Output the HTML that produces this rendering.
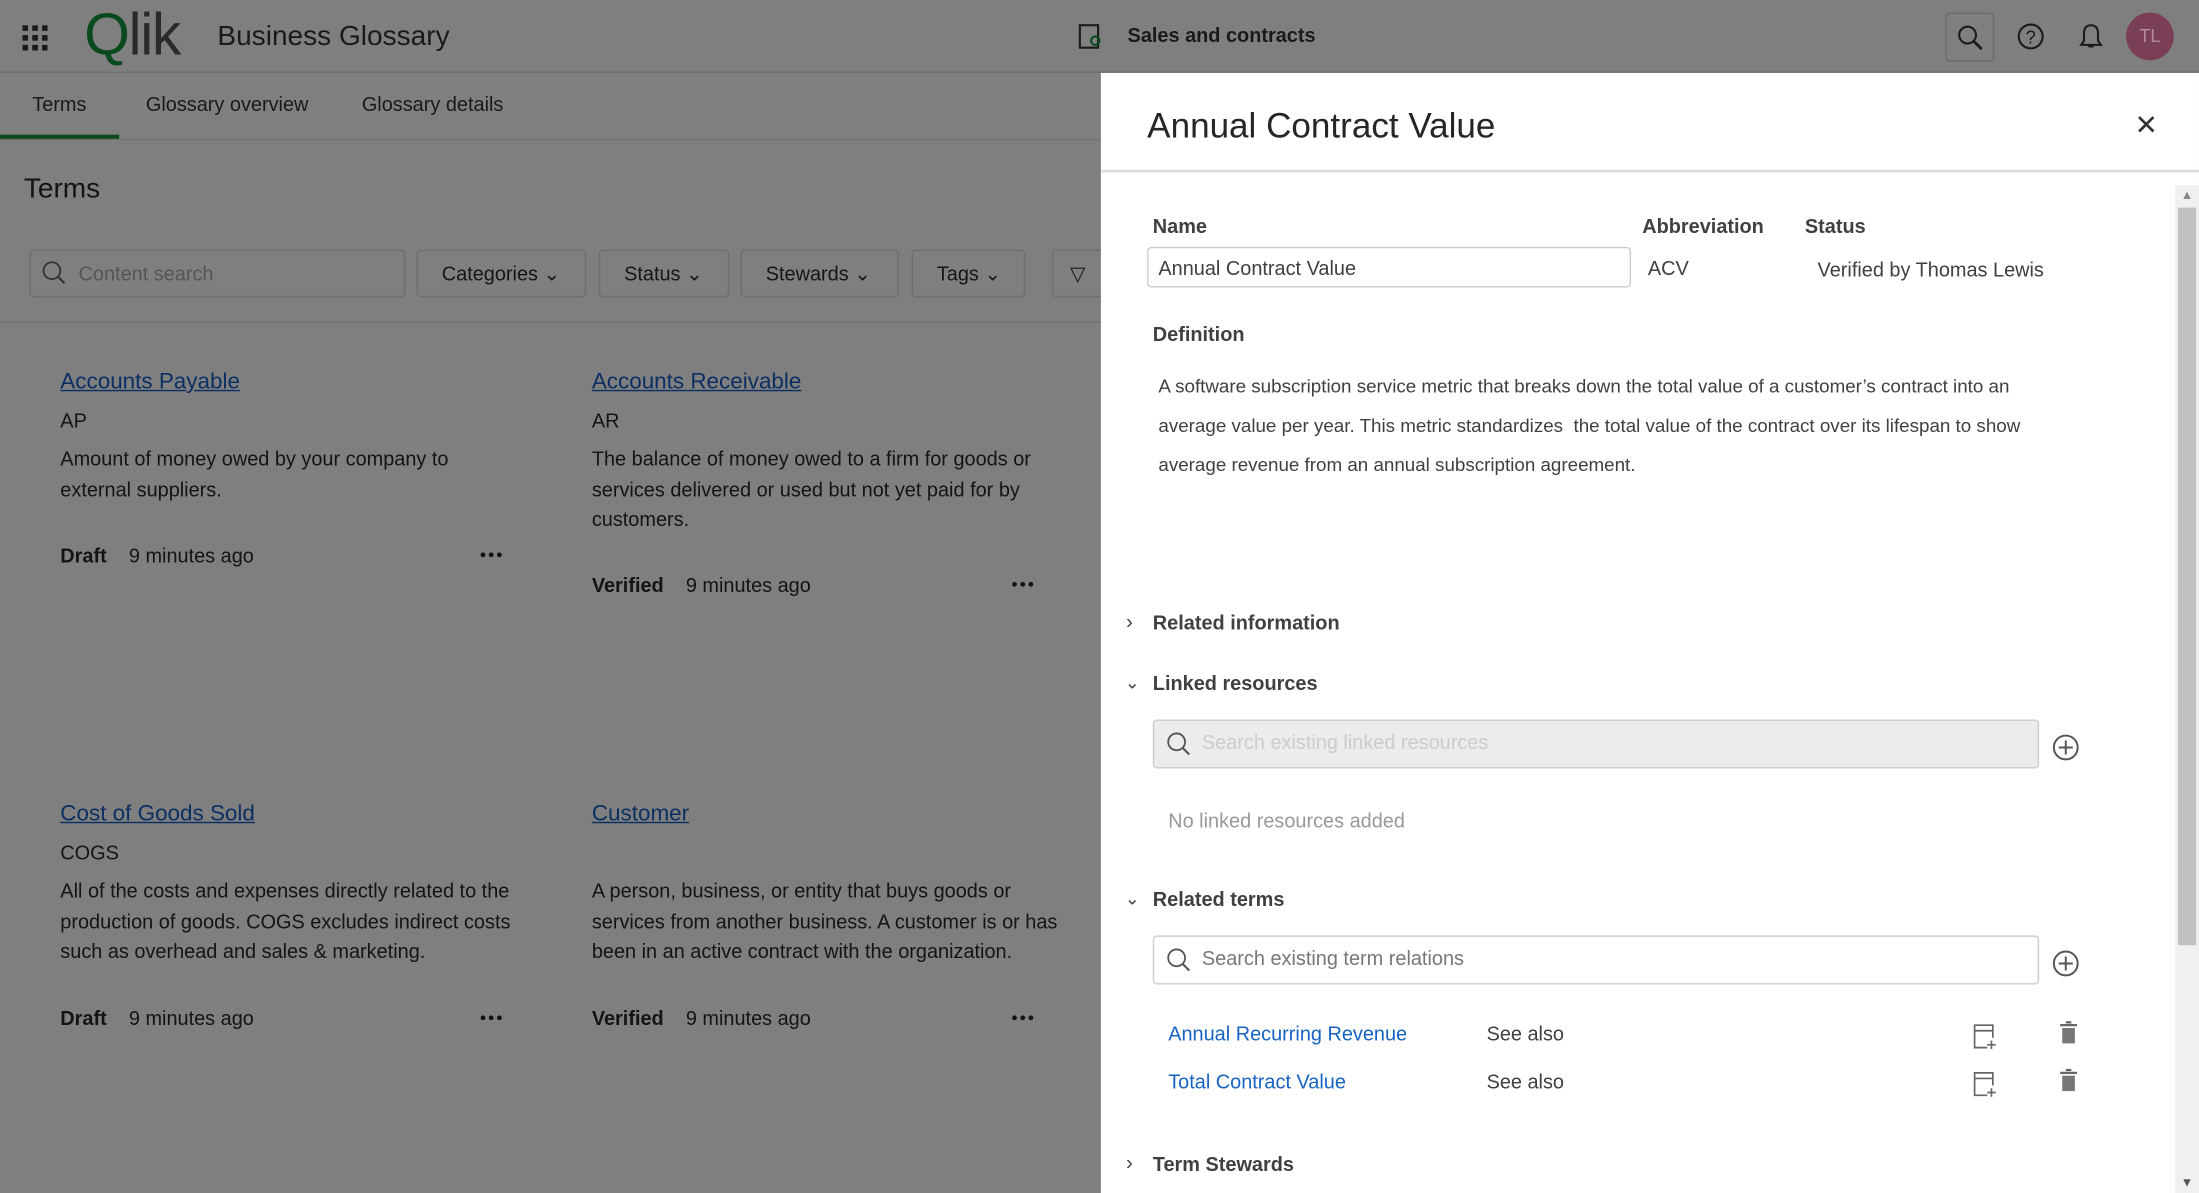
<!DOCTYPE html>
<html><head><meta charset="utf-8"><style>
*{box-sizing:border-box;margin:0;padding:0}
html,body{width:2199px;height:1193px;overflow:hidden;background:#7f7f7f}
#w{position:absolute;left:0;top:0;width:1568px;height:851px;transform:scale(1.40242);transform-origin:0 0;font-family:"Liberation Sans",sans-serif;color:#1a1a1a;font-size:14.2px}
.a{position:absolute;white-space:nowrap}
.dk{color:#141414}
.lk{color:#0b2f63;text-decoration:underline;font-size:16px}
.btn{position:absolute;top:178px;height:34px;border:1px solid #6e6e6e;border-radius:3px;font-size:14.2px;color:#161616;padding:9px 0 0 17px}
.p{position:absolute;left:785px;top:52px;width:783px;height:799px;background:#fff}
.g{color:#404040}
.hd{font-weight:bold;color:#404040;font-size:14.2px}
.in{position:absolute;border:1px solid #ccc;border-radius:3px}
.dots{font-size:8px;letter-spacing:1px;font-weight:bold;color:#141414}
</style></head><body><div id="w">
<div class="a" style="left:0;top:0;width:1568px;height:52px;border-bottom:1px solid #6f6f6f"></div>
<svg class="a" style="left:16px;top:18px" width="18" height="18"><g fill="#1a1a1a"><rect x="0" y="0" width="4" height="4"/><rect x="7" y="0" width="4" height="4"/><rect x="14" y="0" width="4" height="4"/><rect x="0" y="7" width="4" height="4"/><rect x="7" y="7" width="4" height="4"/><rect x="14" y="7" width="4" height="4"/><rect x="0" y="14" width="4" height="4"/><rect x="7" y="14" width="4" height="4"/><rect x="14" y="14" width="4" height="4"/></g></svg>
<div class="a" style="left:60px;top:1px;font-size:42px;color:#2a2a2a;letter-spacing:-1px"><span style="color:#0a4a1f">Q</span>lik</div>
<div class="a" style="left:155px;top:15px;font-size:20px;color:#1a1a1a">Business Glossary</div>
<svg class="a" style="left:769px;top:17px" width="18" height="18"><rect x="1" y="1" width="13" height="16" fill="none" stroke="#1a1a1a" stroke-width="1.5"/><circle cx="12" cy="12" r="3" fill="none" stroke="#0a4a1f" stroke-width="1.5"/></svg>
<div class="a" style="left:804px;top:18px;font-size:14.2px;font-weight:bold;color:#1a1a1a">Sales and contracts</div>
<div class="a" style="left:1387px;top:9px;width:35px;height:35px;border:1px solid #6a6a6a;border-radius:3px"></div>
<svg class="a" style="left:1395px;top:17px" width="20" height="20"><circle cx="8" cy="8" r="6" fill="none" stroke="#1a1a1a" stroke-width="1.5"/><line x1="12" y1="12" x2="18" y2="18" stroke="#1a1a1a" stroke-width="2"/></svg>
<svg class="a" style="left:1438px;top:16px" width="20" height="20"><circle cx="10" cy="10" r="8.5" fill="none" stroke="#1a1a1a" stroke-width="1.5"/><text x="10" y="15" font-size="13" text-anchor="middle" fill="#1a1a1a" font-family="Liberation Sans">?</text></svg>
<svg class="a" style="left:1482px;top:16px" width="18" height="20"><path d="M9 2c-4 0-5 3-5 6v5l-2 3h14l-2-3V8c0-3-1-6-5-6z M7 17h4" fill="none" stroke="#1a1a1a" stroke-width="1.5"/></svg>
<div class="a" style="left:1516px;top:9px;width:34px;height:34px;border-radius:50%;background:#7a3f56;color:#b58a9a;font-size:13px;text-align:center;line-height:34px">TL</div>
<div class="a" style="left:0;top:99px;width:785px;border-top:1px solid #707070"></div>
<div class="a" style="left:0;top:96px;width:85px;height:3px;background:#0c4a22"></div>
<div class="a" style="left:23px;top:67px">Terms</div>
<div class="a" style="left:104px;top:67px">Glossary overview</div>
<div class="a" style="left:258px;top:67px">Glossary details</div>
<div class="a dk" style="left:17px;top:124px;font-size:20px">Terms</div>
<div class="btn" style="left:21px;width:268px;color:#555;padding-left:34px">Content search</div>
<svg class="a" style="left:29px;top:185px" width="20" height="20"><circle cx="8" cy="8" r="6" fill="none" stroke="#333" stroke-width="1.3"/><line x1="12" y1="12" x2="17" y2="17" stroke="#333" stroke-width="1.5"/></svg>
<div class="btn" style="left:297px;width:121px">Categories &#8964;</div>
<div class="btn" style="left:427px;width:93px">Status &#8964;</div>
<div class="btn" style="left:528px;width:113px">Stewards &#8964;</div>
<div class="btn" style="left:650px;width:81px">Tags &#8964;</div>
<div class="btn" style="left:750px;width:40px;padding-left:12px">&#9661;</div>
<div class="a" style="left:0;top:229px;width:785px;border-top:1px solid #707070"></div>
<div class="a lk" style="left:43px;top:264px">Accounts Payable</div>
<div class="a dk" style="left:43px;top:293px">AP</div>
<div class="a dk" style="left:43px;top:318px;line-height:21.5px">Amount of money owed by your company to<br>external suppliers.</div>
<div class="a dk" style="left:43px;top:389px"><b>Draft</b>&nbsp;&nbsp;&nbsp;&nbsp;9 minutes ago</div>
<div class="a dots" style="left:342px;top:391px">&#9679;&#9679;&#9679;</div>
<div class="a lk" style="left:422px;top:264px">Accounts Receivable</div>
<div class="a dk" style="left:422px;top:293px">AR</div>
<div class="a dk" style="left:422px;top:318px;line-height:21.5px">The balance of money owed to a firm for goods or<br>services delivered or used but not yet paid for by<br>customers.</div>
<div class="a dk" style="left:422px;top:410px"><b>Verified</b>&nbsp;&nbsp;&nbsp;&nbsp;9 minutes ago</div>
<div class="a dots" style="left:721px;top:412px">&#9679;&#9679;&#9679;</div>
<div class="a lk" style="left:43px;top:572px">Cost of Goods Sold</div>
<div class="a dk" style="left:43px;top:601px">COGS</div>
<div class="a dk" style="left:43px;top:626px;line-height:21.5px">All of the costs and expenses directly related to the<br>production of goods. COGS excludes indirect costs<br>such as overhead and sales &amp; marketing.</div>
<div class="a dk" style="left:43px;top:719px"><b>Draft</b>&nbsp;&nbsp;&nbsp;&nbsp;9 minutes ago</div>
<div class="a dots" style="left:342px;top:721px">&#9679;&#9679;&#9679;</div>
<div class="a lk" style="left:422px;top:572px">Customer</div>
<div class="a dk" style="left:422px;top:626px;line-height:21.5px">A person, business, or entity that buys goods or<br>services from another business. A customer is or has<br>been in an active contract with the organization.</div>
<div class="a dk" style="left:422px;top:719px"><b>Verified</b>&nbsp;&nbsp;&nbsp;&nbsp;9 minutes ago</div>
<div class="a dots" style="left:721px;top:721px">&#9679;&#9679;&#9679;</div>
<div class="p">
<div class="a" style="left:33px;top:24px;font-size:25px;color:#262626">Annual Contract Value</div>
<div class="a" style="left:737px;top:25px;font-size:20px;color:#333">&#10005;</div>
<div class="a" style="left:0;top:69px;width:783px;border-top:2px solid #ddd"></div>
<div class="a" style="left:766px;top:80px;width:17px;height:719px;background:#f0f0f0"></div>
<div class="a" style="left:768px;top:96px;width:13px;height:526px;background:#c1c1c1"></div>
<div class="a" style="left:770px;top:82px;font-size:9px;color:#888">&#9650;</div>
<div class="a" style="left:770px;top:786px;font-size:9px;color:#555">&#9660;</div>
<div class="a hd" style="left:37px;top:102px">Name</div>
<div class="a hd" style="left:386px;top:102px">Abbreviation</div>
<div class="a hd" style="left:502px;top:102px">Status</div>
<div class="in" style="left:33px;top:124px;width:345px;height:29px"></div>
<div class="a g" style="left:41px;top:132px">Annual Contract Value</div>
<div class="a g" style="left:390px;top:132px">ACV</div>
<div class="a g" style="left:511px;top:133px">Verified by Thomas Lewis</div>
<div class="a hd" style="left:37px;top:179px">Definition</div>
<div class="a g" style="left:41px;top:210px;line-height:28px;font-size:13.4px">A software subscription service metric that breaks down the total value of a customer’s contract into an<br>average value per year. This metric standardizes&nbsp; the total value of the contract over its lifespan to show<br>average revenue from an annual subscription agreement.</div>
<div class="a g" style="left:18px;top:384px">&#8250;</div>
<div class="a hd" style="left:37px;top:385px">Related information</div>
<div class="a g" style="left:17px;top:427px;font-size:13px">&#8964;</div>
<div class="a hd" style="left:37px;top:428px">Linked resources</div>
<div class="in" style="left:37px;top:461px;width:632px;height:35px;background:#ececec"></div>
<svg class="a" style="left:46px;top:469px" width="20" height="20"><circle cx="8" cy="8" r="6" fill="none" stroke="#555" stroke-width="1.3"/><line x1="12" y1="12" x2="17" y2="17" stroke="#555" stroke-width="1.5"/></svg>
<div class="a" style="left:72px;top:470px;color:#ccc">Search existing linked resources</div>
<svg class="a" style="left:678px;top:471px" width="20" height="20"><circle cx="10" cy="10" r="8.5" fill="none" stroke="#555" stroke-width="1.4"/><path d="M10 5v10M5 10h10" stroke="#555" stroke-width="1.4"/></svg>
<div class="a" style="left:48px;top:526px;color:#999">No linked resources added</div>
<div class="a g" style="left:17px;top:581px;font-size:13px">&#8964;</div>
<div class="a hd" style="left:37px;top:582px">Related terms</div>
<div class="in" style="left:37px;top:615px;width:632px;height:35px"></div>
<svg class="a" style="left:46px;top:623px" width="20" height="20"><circle cx="8" cy="8" r="6" fill="none" stroke="#555" stroke-width="1.3"/><line x1="12" y1="12" x2="17" y2="17" stroke="#555" stroke-width="1.5"/></svg>
<div class="a" style="left:72px;top:624px;color:#777">Search existing term relations</div>
<svg class="a" style="left:678px;top:625px" width="20" height="20"><circle cx="10" cy="10" r="8.5" fill="none" stroke="#555" stroke-width="1.4"/><path d="M10 5v10M5 10h10" stroke="#555" stroke-width="1.4"/></svg>
<div class="a" style="left:48px;top:678px;color:#1763c4">Annual Recurring Revenue</div>
<div class="a g" style="left:275px;top:678px">See also</div>
<div class="a" style="left:48px;top:712px;color:#1763c4">Total Contract Value</div>
<div class="a g" style="left:275px;top:712px">See also</div>
<svg class="a" style="left:622px;top:678px" width="18" height="20"><path d="M14 10V1H1v16h9M1 5h13M13 12v6M10 15h6" fill="none" stroke="#666" stroke-width="1.2"/></svg>
<svg class="a" style="left:622px;top:712px" width="18" height="20"><path d="M14 10V1H1v16h9M1 5h13M13 12v6M10 15h6" fill="none" stroke="#666" stroke-width="1.2"/></svg>
<svg class="a" style="left:683px;top:676px" width="14" height="18"><path d="M1 3h12M5 1h4" stroke="#666" stroke-width="1.6"/><rect x="2.5" y="5" width="9" height="11" fill="#777"/></svg>
<svg class="a" style="left:683px;top:710px" width="14" height="18"><path d="M1 3h12M5 1h4" stroke="#666" stroke-width="1.6"/><rect x="2.5" y="5" width="9" height="11" fill="#777"/></svg>
<div class="a g" style="left:18px;top:770px">&#8250;</div>
<div class="a hd" style="left:37px;top:771px">Term Stewards</div>
</div>
</div></body></html>
